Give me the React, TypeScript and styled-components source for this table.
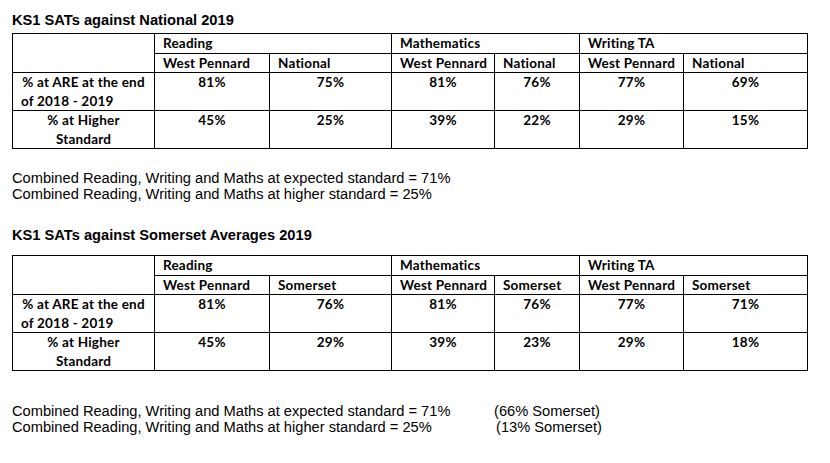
import React from "react";
import styled, { createGlobalStyle } from "styled-components";

const GlobalStyle = createGlobalStyle`
  html, body { margin: 0; padding: 0; background: #ffffff; }
  body { color: #000000; }
`;

const Page = styled.div`
  padding: 12px 0 0 12px;
  width: 818px;
  box-sizing: border-box;
`;

const Title = styled.h2<{ $gap: number }>`
  margin: ${(p) => p.$gap}px 0 0 0;
  font-family: "Liberation Sans", Arial, sans-serif;
  font-weight: 700;
  font-size: 14.67px;
  line-height: 17px;
`;

const Table = styled.table<{ $gap: number }>`
  margin-top: ${(p) => p.$gap}px;
  border-collapse: collapse;
  table-layout: fixed;
  width: 795px;
  font-family: Lato, "Open Sans", sans-serif;
  font-weight: 700;
  font-size: 13.5px;
  letter-spacing: 0.2px;
  line-height: 18.5px;
`;

const Cell = styled.td<{ $align?: "left" | "center"; $h: number }>`
  border: 1px solid #000000;
  padding: 0 8px;
  height: ${(p) => p.$h}px;
  vertical-align: top;
  text-align: ${(p) => p.$align ?? "left"};
  white-space: nowrap;
  box-sizing: border-box;
`;

const LabelLine = styled.div<{ $align: "left" | "center" }>`
  text-align: ${(p) => p.$align};
`;

const Notes = styled.div<{ $gap: number }>`
  margin-top: ${(p) => p.$gap}px;
  font-family: "Liberation Sans", Arial, sans-serif;
  font-size: 14.67px;
  line-height: 16px;
`;

const NoteRow = styled.div`
  display: grid;
  grid-template-columns: 482px auto;
  white-space: nowrap;
`;

const Aside = styled.span<{ $shift: number }>`
  padding-left: ${(p) => p.$shift}px;
`;

const colWidths = [142, 115, 122, 103, 85, 104, 124];

type Props = {
  compare: string;
  are: string[];
  higher: string[];
};

function ResultsTable({ compare, are, higher, gap }: Props & { gap: number }) {
  return (
    <Table $gap={gap}>
      <colgroup>
        {colWidths.map((w, i) => (
          <col key={i} style={{ width: w }} />
        ))}
      </colgroup>
      <tbody>
        <tr>
          <Cell rowSpan={2} $h={38} />
          <Cell colSpan={2} $h={18}>Reading</Cell>
          <Cell colSpan={2} $h={18}>Mathematics</Cell>
          <Cell colSpan={2} $h={18}>Writing TA</Cell>
        </tr>
        <tr>
          {[0, 1, 2].map((i) => (
            <React.Fragment key={i}>
              <Cell $h={19}>West Pennard</Cell>
              <Cell $h={19}>{compare}</Cell>
            </React.Fragment>
          ))}
        </tr>
        <tr>
          <Cell $h={37}>
            <LabelLine $align="center">% at ARE at the end</LabelLine>
            <LabelLine $align="left">of 2018 - 2019</LabelLine>
          </Cell>
          {are.map((v, i) => (
            <Cell key={i} $h={37} $align="center">
              {v}
            </Cell>
          ))}
        </tr>
        <tr>
          <Cell $h={37} $align="center">
            % at Higher
            <br />
            Standard
          </Cell>
          {higher.map((v, i) => (
            <Cell key={i} $h={37} $align="center">
              {v}
            </Cell>
          ))}
        </tr>
      </tbody>
    </Table>
  );
}

export default function App() {
  return (
    <>
      <GlobalStyle />
      <Page>
        <Title $gap={0}>KS1 SATs against National 2019</Title>
        <ResultsTable
          gap={4}
          compare="National"
          are={["81%", "75%", "81%", "76%", "77%", "69%"]}
          higher={["45%", "25%", "39%", "22%", "29%", "15%"]}
        />
        <Notes $gap={21}>
          <div>Combined Reading, Writing and Maths at expected standard = 71%</div>
          <div>Combined Reading, Writing and Maths at higher standard = 25%</div>
        </Notes>
        <Title $gap={25}>KS1 SATs against Somerset Averages 2019</Title>
        <ResultsTable
          gap={11}
          compare="Somerset"
          are={["81%", "76%", "81%", "76%", "77%", "71%"]}
          higher={["45%", "29%", "39%", "23%", "29%", "18%"]}
        />
        <Notes $gap={32}>
          <NoteRow>
            <span>Combined Reading, Writing and Maths at expected standard = 71%</span>
            <Aside $shift={0}>(66% Somerset)</Aside>
          </NoteRow>
          <NoteRow>
            <span>Combined Reading, Writing and Maths at higher standard = 25%</span>
            <Aside $shift={2}>(13% Somerset)</Aside>
          </NoteRow>
        </Notes>
      </Page>
    </>
  );
}
